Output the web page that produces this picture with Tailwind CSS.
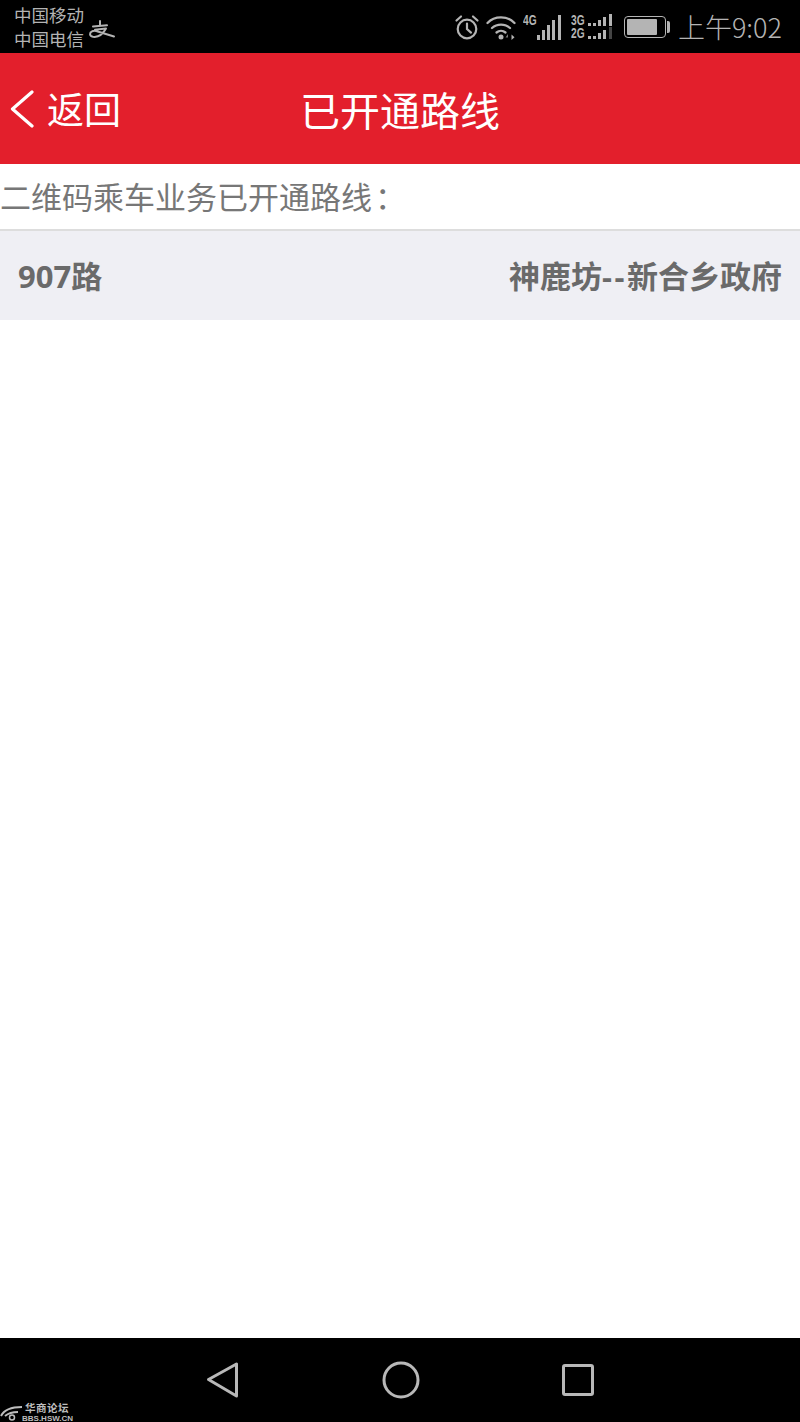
<!DOCTYPE html>
<html lang="zh-CN">
<head>
    <meta charset="UTF-8">
    <meta name="viewport" content="width=device-width, initial-scale=1.0">
    <title>已开通路线</title>
    <script src="https://cdn.jsdelivr.net/npm/@tailwindcss/browser@4"></script>
</head>
<body class="bg-white font-['Noto_Sans_CJK_SC','Noto_Sans',sans-serif]">
    <div class="flex flex-col h-[1422px] w-[800px] overflow-hidden">
        <!-- status bar -->
        <div class="h-[53px] bg-black flex items-center justify-between pl-[14px] pr-[18px] text-[#b4b4b4]">
            <div class="flex items-center">
                <div class="text-[17.5px] leading-[24px]">
                    <div>中国移动</div>
                    <div>中国电信</div>
                </div>
                <svg class="w-[36px] h-[32px] ml-px" viewBox="0 0 36 32" fill="none" stroke="#b4b4b4" stroke-width="2" stroke-linecap="round" stroke-linejoin="round">
                    <path d="M15 10v5M8 15.500l14-1.200"/>
                    <path d="M10 18.800l11-1.200C18 23 13 26.500 8 25.800 4 25 4.500 21.500 7 20.300c2-1 4.500-.3 6.500.5L29 25.500"/>
                </svg>
            </div>
            <div class="flex items-center">
                <svg class="w-[26px] h-[26px]" viewBox="0 0 26 26" fill="none" stroke="#b4b4b4" stroke-width="2.200" stroke-linecap="round">
                    <circle cx="13" cy="15" r="9.300"/>
                    <path d="M13 9.500V15l4 3.600"/>
                    <path d="M2.500 6.500l4.500-4M23.500 6.500l-4.500-4"/>
                </svg>
                <svg class="w-[30px] h-[26px] ml-[6px]" viewBox="0 0 30 26" fill="none" stroke="#b4b4b4" stroke-width="2.300" stroke-linecap="round">
                    <path d="M1.500 9C8.500 1.500 21.500 1.500 28.500 9"/>
                    <path d="M6 14c5-4.600 13-4.600 18 0"/>
                    <path d="M10.500 18.500c2.600-2.200 6.400-2.200 9 0"/>
                    <circle cx="15" cy="23" r="2.500" fill="#b4b4b4" stroke="none"/>
                    <path d="M22 20l-2.500 3.500H22z" fill="#777" stroke="none"/>
                    <path d="M25.500 20.500l3 2.700-3 2.700z" fill="#b4b4b4" stroke="none"/>
                </svg>
                <div class="relative w-[39px] h-[26px] ml-[7px]">
                    <span class="absolute left-0 -top-[2px] origin-left scale-x-[0.68] text-[15px] leading-[15px] font-bold font-['Liberation_Sans',sans-serif]">4G</span>
                    <div class="absolute left-[14px] bottom-0 flex items-end gap-[2.200px]">
                        <i class="block w-[3px] h-[5px] bg-[#b4b4b4]"></i>
                        <i class="block w-[3px] h-[10px] bg-[#b4b4b4]"></i>
                        <i class="block w-[3px] h-[15px] bg-[#b4b4b4]"></i>
                        <i class="block w-[3px] h-[20px] bg-[#b4b4b4]"></i>
                        <i class="block w-[3px] h-[25px] bg-[#b4b4b4]"></i>
                    </div>
                </div>
                <div class="w-[42px] ml-[9px] flex flex-col gap-[1px]">
                    <div class="flex items-end h-[12px]">
                        <span class="w-[17px] origin-left scale-x-[0.68] text-[15px] leading-[12px] font-bold font-['Liberation_Sans',sans-serif]">3G</span>
                        <div class="flex items-end gap-[2.200px]">
                            <i class="block w-[3px] h-[3px] bg-[#b4b4b4]"></i>
                            <i class="block w-[3px] h-[3px] bg-[#b4b4b4]"></i>
                            <i class="block w-[3px] h-[6px] bg-[#b4b4b4]"></i>
                            <i class="block w-[3px] h-[9px] bg-[#b4b4b4]"></i>
                            <i class="block w-[3px] h-[12px] bg-[#b4b4b4]"></i>
                        </div>
                    </div>
                    <div class="flex items-end h-[12px]">
                        <span class="w-[17px] origin-left scale-x-[0.68] text-[15px] leading-[12px] font-bold font-['Liberation_Sans',sans-serif]">2G</span>
                        <div class="flex items-end gap-[2.200px]">
                            <i class="block w-[3px] h-[3px] bg-[#b4b4b4]"></i>
                            <i class="block w-[3px] h-[3px] bg-[#b4b4b4]"></i>
                            <i class="block w-[3px] h-[6px] bg-[#b4b4b4]"></i>
                            <i class="block w-[3px] h-[9px] bg-[#b4b4b4]"></i>
                            <i class="block w-[3px] h-[12px] bg-[#444]"></i>
                        </div>
                    </div>
                </div>
                <div class="flex items-center ml-[11px]">
                    <div class="w-[42px] h-[22px] rounded-[4px] border border-[#b4b4b4] p-[2px] flex">
                        <div class="w-[30px] bg-[#b4b4b4] rounded-[1px]"></div>
                    </div>
                    <div class="w-[3px] h-[12px] ml-px bg-[#b4b4b4] rounded-r-[2px]"></div>
                </div>
                <span class="ml-[8px] text-[27px] leading-none font-light">上午9:02</span>
            </div>
        </div>

        <!-- header -->
        <header class="relative h-[111px] bg-[#e31f2c] flex items-center justify-center text-white">
            <div class="absolute left-[10px] top-0 h-full flex items-center">
                <svg class="w-[24px] h-[38px]" viewBox="0 0 24 38" fill="none" stroke="white" stroke-width="3.200" stroke-linecap="round" stroke-linejoin="round">
                    <path d="M22 2L2.500 19 22 36"/>
                </svg>
                <span class="ml-[13px] text-[37px] leading-none">返回</span>
            </div>
            <h1 class="text-[40px] leading-none">已开通路线</h1>
        </header>

        <!-- list -->
        <main class="flex-1 bg-white">
            <p class="h-[65px] flex items-center text-[31px] text-[#777]">二维码乘车业务已开通路线<span class="ml-[3px]">：</span></p>
            <div class="h-[2px] bg-[#dddddd]"></div>
            <div class="h-[89px] bg-[#efeff4] flex items-center justify-between px-[18px] pt-[2px] text-[#6a6a6a] text-[31px] font-bold font-['Open_Sans','Noto_Sans_CJK_SC',sans-serif]">
                <span>907路</span>
                <span>神鹿坊<span class="tracking-[2.500px]">--</span>新合乡政府</span>
            </div>
        </main>

        <!-- nav bar -->
        <nav class="relative h-[84px] bg-black flex items-center justify-center gap-[141px]">
            <svg class="w-[36px] h-[38px]" viewBox="0 0 36 38" fill="none" stroke="#b8b8b8" stroke-width="3" stroke-linejoin="round">
                <path d="M3.500 18.500L31.500 3v32z"/>
            </svg>
            <svg class="w-[38px] h-[38px]" viewBox="0 0 38 38" fill="none" stroke="#b8b8b8" stroke-width="3">
                <circle cx="19" cy="19" r="17"/>
            </svg>
            <svg class="w-[34px] h-[34px]" viewBox="0 0 34 34" fill="none" stroke="#b8b8b8" stroke-width="3" stroke-linejoin="round">
                <rect x="2.500" y="2.500" width="29" height="29" rx="1.500"/>
            </svg>
            <!-- watermark -->
            <div class="absolute left-0 bottom-0 flex items-end text-[#bdbdbd]">
                <svg class="w-[22px] h-[18px]" viewBox="0 0 22 18" fill="none" stroke="#bdbdbd" stroke-width="2">
                    <path d="M1 12C4 6 12 3 22 3"/>
                    <path d="M5 12c3-2.500 8-4 13-4"/>
                    <circle cx="12" cy="13.500" r="2.500" stroke-width="1.500"/>
                </svg>
                <div class="flex flex-col leading-none">
                    <span class="text-[10.500px] leading-[11px] ml-[3px] mb-[2px] font-bold tracking-[0.500px]">华商论坛</span>
                    <span class="text-[8px] leading-[7px] font-bold font-['Liberation_Sans',sans-serif]">BBS.HSW.CN</span>
                </div>
            </div>
        </nav>
    </div>
</body>
</html>
